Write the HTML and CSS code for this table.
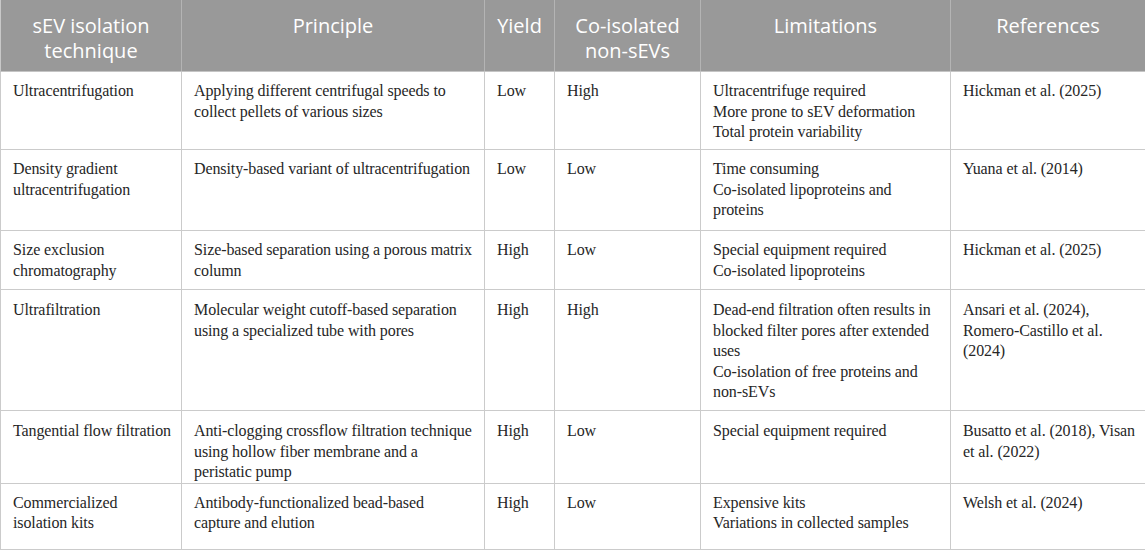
FILE: index.html
```html
<!DOCTYPE html>
<html lang="en">
<head>
    <meta charset="UTF-8">
    <title>sEV isolation techniques</title>
    <link rel="stylesheet" href="styles.css">
</head>
<body>
    <table class="sev-table">
        <colgroup>
            <col class="c-tech">
            <col class="c-principle">
            <col class="c-yield">
            <col class="c-coiso">
            <col class="c-limit">
            <col class="c-refs">
        </colgroup>
        <thead>
            <tr>
                <th>sEV isolation technique</th>
                <th>Principle</th>
                <th>Yield</th>
                <th>Co-isolated non-sEVs</th>
                <th>Limitations</th>
                <th>References</th>
            </tr>
        </thead>
        <tbody>
            <tr class="r1">
                <td>Ultracentrifugation</td>
                <td>Applying different centrifugal speeds to collect pellets of various sizes</td>
                <td>Low</td>
                <td>High</td>
                <td>Ultracentrifuge required<br>More prone to sEV deformation<br>Total protein variability</td>
                <td>Hickman et al. (2025)</td>
            </tr>
            <tr class="r2">
                <td>Density gradient ultracentrifugation</td>
                <td>Density-based variant of ultracentrifugation</td>
                <td>Low</td>
                <td>Low</td>
                <td>Time consuming<br>Co-isolated lipoproteins and proteins</td>
                <td>Yuana et al. (2014)</td>
            </tr>
            <tr class="r3">
                <td>Size exclusion chromatography</td>
                <td>Size-based separation using a porous matrix column</td>
                <td>High</td>
                <td>Low</td>
                <td>Special equipment required<br>Co-isolated lipoproteins</td>
                <td>Hickman et al. (2025)</td>
            </tr>
            <tr class="r4">
                <td>Ultrafiltration</td>
                <td>Molecular weight cutoff-based separation using a specialized tube with pores</td>
                <td>High</td>
                <td>High</td>
                <td>Dead-end filtration often results in blocked filter pores after extended uses<br>Co-isolation of free proteins and non-sEVs</td>
                <td>Ansari et al. (2024), Romero-Castillo et al. (2024)</td>
            </tr>
            <tr class="r5">
                <td>Tangential flow filtration</td>
                <td>Anti-clogging crossflow filtration technique using hollow fiber membrane and a peristatic pump</td>
                <td>High</td>
                <td>Low</td>
                <td>Special equipment required</td>
                <td>Busatto et al. (2018), Visan et al. (2022)</td>
            </tr>
            <tr class="r6">
                <td>Commercialized<br>isolation kits</td>
                <td>Antibody-functionalized bead-based<br>capture and elution</td>
                <td>High</td>
                <td>Low</td>
                <td>Expensive kits<br>Variations in collected samples</td>
                <td>Welsh et al. (2024)</td>
            </tr>
        </tbody>
    </table>
</body>
</html>
```

FILE: styles.css
```css
body {
    margin: 0;
    background: #fff;
    font-family: "Liberation Serif", "Times New Roman", serif;
    color: #262626;
}
.sev-table {
    width: 1145px;
    border-collapse: collapse;
    table-layout: fixed;
}
.c-tech { width: 181px; }
.c-principle { width: 303px; }
.c-yield { width: 70px; }
.c-coiso { width: 146px; }
.c-limit { width: 250px; }
.c-refs { width: 195px; }
th {
    height: 71px;
    padding: 13px 8px 8px;
    box-sizing: border-box;
    background-color: #999;
    color: #fff;
    font-family: "Open Sans", "Liberation Sans", sans-serif;
    font-weight: normal;
    font-size: 20px;
    line-height: 25px;
    text-align: center;
    vertical-align: top;
    border-left: 1px solid #b4b4b4;
    border-right: 1px solid #b4b4b4;
    border-bottom: 1px solid #c4c4c4;
}
th:first-child {
    border-left-color: #c8c8c8;
}
td {
    padding: 9px 10px 0 12px;
    font-size: 16px;
    line-height: 20.5px;
    letter-spacing: -0.1px;
    vertical-align: top;
    border: 1px solid #cbcbcb;
    box-sizing: border-box;
}
td:first-child,
td:last-child {
    padding-right: 2px;
}
.r1 td { height: 78px; }
.r2 td { height: 81px; }
.r3 td { height: 59px; }
.r4 td { height: 121px; padding-top: 10px; }
.r5 td { height: 72px; padding-top: 10px; }
.r6 td { height: 66px; }
```
